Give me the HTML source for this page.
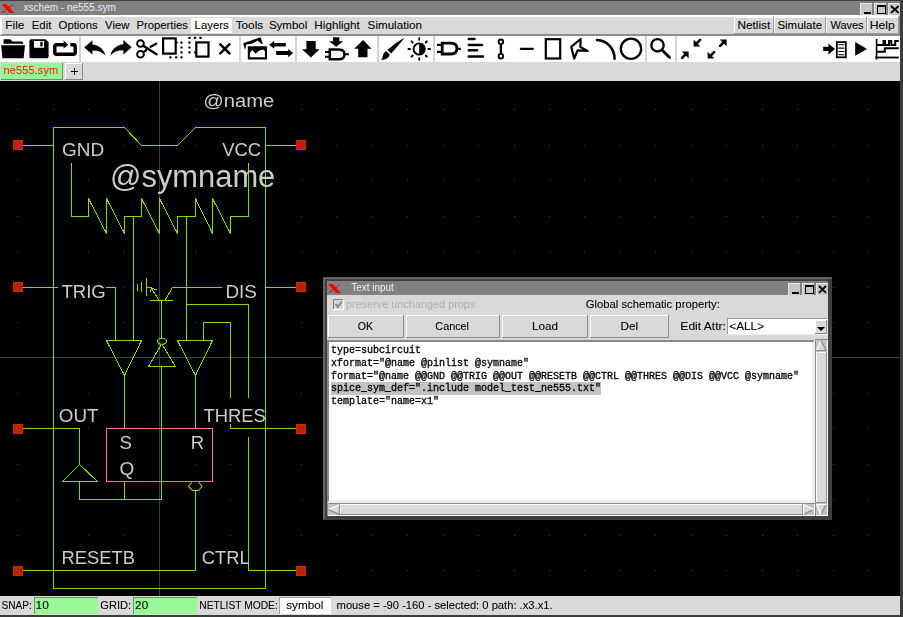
<!DOCTYPE html>
<html><head><meta charset="utf-8"><style>
html,body{margin:0;padding:0;background:#d9d9d9;width:903px;height:617px;overflow:hidden;}
svg{display:block;}
</style></head><body>
<svg width="903" height="617" viewBox="0 0 903 617" shape-rendering="crispEdges">
<rect x="0" y="0" width="903" height="617" fill="#d9d9d9" />
<rect x="0" y="0" width="903" height="15" fill="#808080" />
<rect x="0" y="0" width="903" height="1" fill="#3c3c3c" />
<g shape-rendering="geometricPrecision">
<path d="M1.5,4 L6,4 L14.5,13 L9.5,13 Z" fill="#ff0000"/>
<path d="M2.5,12.8 L13,4.3" stroke="#ff0000" stroke-width="1" shape-rendering="crispEdges"/>
</g>
<text x="23.61" y="11.1" font-size="11" fill="#e8ecf4" font-family='"Liberation Sans", sans-serif' textLength="92.22" lengthAdjust="spacingAndGlyphs" >xschem - ne555.sym</text>
<rect x="860" y="3" width="12" height="12" fill="#c6c6c6" />
<rect x="860" y="3" width="12" height="1" fill="#e4e4e4" />
<rect x="860" y="3" width="1" height="12" fill="#e4e4e4" />
<rect x="874" y="3" width="12" height="12" fill="#c6c6c6" />
<rect x="874" y="3" width="12" height="1" fill="#e4e4e4" />
<rect x="874" y="3" width="1" height="12" fill="#e4e4e4" />
<rect x="888" y="3" width="12" height="12" fill="#c6c6c6" />
<rect x="888" y="3" width="12" height="1" fill="#e4e4e4" />
<rect x="888" y="3" width="1" height="12" fill="#e4e4e4" />
<rect x="864" y="12" width="7" height="2" fill="#000" />
<rect x="877.5" y="5.5" width="8" height="8" fill="none" stroke="#000" stroke-width="1.1"/>
<rect x="877" y="5" width="9" height="2" fill="#000" />
<path d="M891,6 L898.6,12.8 M898.6,6 L891,12.8" stroke="#000" stroke-width="1.8" shape-rendering="geometricPrecision"/>
<rect x="0" y="15" width="900" height="2" fill="#ffffff" />
<rect x="2" y="17" width="896" height="17" fill="#d9d9d9" />
<rect x="0" y="15" width="2" height="19" fill="#ffffff" />
<path d="M2,34 L898,34 L898,17 L900,15 L900,36 L0,36 Z" fill="#8c8c8c" shape-rendering="geometricPrecision"/>
<rect x="191" y="18" width="41" height="15" fill="#ffffff" />
<text x="5.39" y="28.7" font-size="10.5" fill="#000000" font-family='"Liberation Sans", sans-serif' textLength="18.97" lengthAdjust="spacingAndGlyphs" stroke="#000000" stroke-width="0.08" >File</text>
<text x="31.82" y="28.7" font-size="10.5" fill="#000000" font-family='"Liberation Sans", sans-serif' textLength="19.51" lengthAdjust="spacingAndGlyphs" stroke="#000000" stroke-width="0.08" >Edit</text>
<text x="58.60" y="28.7" font-size="10.5" fill="#000000" font-family='"Liberation Sans", sans-serif' textLength="39.04" lengthAdjust="spacingAndGlyphs" stroke="#000000" stroke-width="0.08" >Options</text>
<text x="105.10" y="28.7" font-size="10.5" fill="#000000" font-family='"Liberation Sans", sans-serif' textLength="24.25" lengthAdjust="spacingAndGlyphs" stroke="#000000" stroke-width="0.08" >View</text>
<text x="136.46" y="28.7" font-size="10.5" fill="#000000" font-family='"Liberation Sans", sans-serif' textLength="51.35" lengthAdjust="spacingAndGlyphs" stroke="#000000" stroke-width="0.08" >Properties</text>
<text x="194.63" y="28.7" font-size="10.5" fill="#000000" font-family='"Liberation Sans", sans-serif' textLength="34.02" lengthAdjust="spacingAndGlyphs" stroke="#000000" stroke-width="0.08" >Layers</text>
<text x="235.72" y="28.7" font-size="10.5" fill="#000000" font-family='"Liberation Sans", sans-serif' textLength="27.39" lengthAdjust="spacingAndGlyphs" stroke="#000000" stroke-width="0.08" >Tools</text>
<text x="268.96" y="28.7" font-size="10.5" fill="#000000" font-family='"Liberation Sans", sans-serif' textLength="38.27" lengthAdjust="spacingAndGlyphs" stroke="#000000" stroke-width="0.08" >Symbol</text>
<text x="314.36" y="28.7" font-size="10.5" fill="#000000" font-family='"Liberation Sans", sans-serif' textLength="45.50" lengthAdjust="spacingAndGlyphs" stroke="#000000" stroke-width="0.08" >Highlight</text>
<text x="367.63" y="28.7" font-size="10.5" fill="#000000" font-family='"Liberation Sans", sans-serif' textLength="54.29" lengthAdjust="spacingAndGlyphs" stroke="#000000" stroke-width="0.08" >Simulation</text>
<rect x="734" y="17" width="40" height="17" fill="#d9d9d9" />
<rect x="734" y="17" width="40" height="1" fill="#ffffff" />
<rect x="734" y="17" width="1" height="17" fill="#ffffff" />
<rect x="734" y="33" width="40" height="1" fill="#9a9a9a" />
<rect x="773" y="17" width="1" height="17" fill="#9a9a9a" />
<text x="737.44" y="28.7" font-size="10.5" fill="#000000" font-family='"Liberation Sans", sans-serif' textLength="32.79" lengthAdjust="spacingAndGlyphs" stroke="#000000" stroke-width="0.08" >Netlist</text>
<rect x="774" y="17" width="52" height="17" fill="#d9d9d9" />
<rect x="774" y="17" width="52" height="1" fill="#ffffff" />
<rect x="774" y="17" width="1" height="17" fill="#ffffff" />
<rect x="774" y="33" width="52" height="1" fill="#9a9a9a" />
<rect x="825" y="17" width="1" height="17" fill="#9a9a9a" />
<text x="777.41" y="28.7" font-size="10.5" fill="#000000" font-family='"Liberation Sans", sans-serif' textLength="44.65" lengthAdjust="spacingAndGlyphs" stroke="#000000" stroke-width="0.08" >Simulate</text>
<rect x="826" y="17" width="41" height="17" fill="#d9d9d9" />
<rect x="826" y="17" width="41" height="1" fill="#ffffff" />
<rect x="826" y="17" width="1" height="17" fill="#ffffff" />
<rect x="826" y="33" width="41" height="1" fill="#9a9a9a" />
<rect x="866" y="17" width="1" height="17" fill="#9a9a9a" />
<text x="830.43" y="28.7" font-size="10.5" fill="#000000" font-family='"Liberation Sans", sans-serif' textLength="33.16" lengthAdjust="spacingAndGlyphs" stroke="#000000" stroke-width="0.08" >Waves</text>
<rect x="867" y="17" width="32" height="17" fill="#d9d9d9" />
<rect x="867" y="17" width="32" height="1" fill="#ffffff" />
<rect x="867" y="17" width="1" height="17" fill="#ffffff" />
<rect x="867" y="33" width="32" height="1" fill="#9a9a9a" />
<rect x="898" y="17" width="1" height="17" fill="#9a9a9a" />
<text x="869.70" y="28.7" font-size="10.5" fill="#000000" font-family='"Liberation Sans", sans-serif' textLength="25.03" lengthAdjust="spacingAndGlyphs" stroke="#000000" stroke-width="0.08" >Help</text>
<rect x="0" y="36" width="900" height="26" fill="#ffffff" />
<rect x="79" y="36" width="2" height="26" fill="#d4d4d4" />
<rect x="239" y="36" width="2" height="26" fill="#d4d4d4" />
<rect x="295" y="36" width="2" height="26" fill="#d4d4d4" />
<rect x="377" y="36" width="2" height="26" fill="#d4d4d4" />
<rect x="433" y="36" width="2" height="26" fill="#d4d4d4" />
<rect x="645" y="36" width="2" height="26" fill="#d4d4d4" />
<rect x="675" y="36" width="2" height="26" fill="#d4d4d4" />
<rect x="0" y="62" width="900" height="19" fill="#d9d9d9" />
<rect x="1" y="63" width="62" height="17" fill="#98f898" />
<rect x="1" y="79" width="62" height="1" fill="#5a9a5a" />
<rect x="62" y="63" width="1" height="17" fill="#5a9a5a" />
<text x="3.57" y="74.2" font-size="10.5" fill="#ff1010" font-family='"Liberation Sans", sans-serif' textLength="54.78" lengthAdjust="spacingAndGlyphs" >ne555.sym</text>
<rect x="65" y="63" width="18" height="17" fill="#d9d9d9" />
<rect x="65" y="63" width="18" height="1" fill="#ffffff" />
<rect x="65" y="63" width="1" height="17" fill="#ffffff" />
<rect x="65" y="79" width="18" height="1" fill="#8a8a8a" />
<rect x="82" y="63" width="1" height="17" fill="#8a8a8a" />
<path d="M70.8,71.5 L77.8,71.5 M74.5,68 L74.5,75" stroke="#000" stroke-width="1"/>
<rect x="0" y="81" width="900" height="515" fill="#000000" />
<g>
<rect x="17" y="109" width="1" height="1" fill="#3f3f3f" />
<rect x="17" y="145" width="1" height="1" fill="#3f3f3f" />
<rect x="17" y="180" width="1" height="1" fill="#3f3f3f" />
<rect x="17" y="216" width="1" height="1" fill="#3f3f3f" />
<rect x="17" y="251" width="1" height="1" fill="#3f3f3f" />
<rect x="17" y="287" width="1" height="1" fill="#3f3f3f" />
<rect x="17" y="322" width="1" height="1" fill="#3f3f3f" />
<rect x="17" y="357" width="1" height="1" fill="#3f3f3f" />
<rect x="17" y="393" width="1" height="1" fill="#3f3f3f" />
<rect x="17" y="428" width="1" height="1" fill="#3f3f3f" />
<rect x="17" y="464" width="1" height="1" fill="#3f3f3f" />
<rect x="17" y="499" width="1" height="1" fill="#3f3f3f" />
<rect x="17" y="535" width="1" height="1" fill="#3f3f3f" />
<rect x="17" y="570" width="1" height="1" fill="#3f3f3f" />
<rect x="53" y="109" width="1" height="1" fill="#3f3f3f" />
<rect x="53" y="145" width="1" height="1" fill="#3f3f3f" />
<rect x="53" y="180" width="1" height="1" fill="#3f3f3f" />
<rect x="53" y="216" width="1" height="1" fill="#3f3f3f" />
<rect x="53" y="251" width="1" height="1" fill="#3f3f3f" />
<rect x="53" y="287" width="1" height="1" fill="#3f3f3f" />
<rect x="53" y="322" width="1" height="1" fill="#3f3f3f" />
<rect x="53" y="357" width="1" height="1" fill="#3f3f3f" />
<rect x="53" y="393" width="1" height="1" fill="#3f3f3f" />
<rect x="53" y="428" width="1" height="1" fill="#3f3f3f" />
<rect x="53" y="464" width="1" height="1" fill="#3f3f3f" />
<rect x="53" y="499" width="1" height="1" fill="#3f3f3f" />
<rect x="53" y="535" width="1" height="1" fill="#3f3f3f" />
<rect x="53" y="570" width="1" height="1" fill="#3f3f3f" />
<rect x="88" y="109" width="1" height="1" fill="#3f3f3f" />
<rect x="88" y="145" width="1" height="1" fill="#3f3f3f" />
<rect x="88" y="180" width="1" height="1" fill="#3f3f3f" />
<rect x="88" y="216" width="1" height="1" fill="#3f3f3f" />
<rect x="88" y="251" width="1" height="1" fill="#3f3f3f" />
<rect x="88" y="287" width="1" height="1" fill="#3f3f3f" />
<rect x="88" y="322" width="1" height="1" fill="#3f3f3f" />
<rect x="88" y="357" width="1" height="1" fill="#3f3f3f" />
<rect x="88" y="393" width="1" height="1" fill="#3f3f3f" />
<rect x="88" y="428" width="1" height="1" fill="#3f3f3f" />
<rect x="88" y="464" width="1" height="1" fill="#3f3f3f" />
<rect x="88" y="499" width="1" height="1" fill="#3f3f3f" />
<rect x="88" y="535" width="1" height="1" fill="#3f3f3f" />
<rect x="88" y="570" width="1" height="1" fill="#3f3f3f" />
<rect x="124" y="109" width="1" height="1" fill="#3f3f3f" />
<rect x="124" y="145" width="1" height="1" fill="#3f3f3f" />
<rect x="124" y="180" width="1" height="1" fill="#3f3f3f" />
<rect x="124" y="216" width="1" height="1" fill="#3f3f3f" />
<rect x="124" y="251" width="1" height="1" fill="#3f3f3f" />
<rect x="124" y="287" width="1" height="1" fill="#3f3f3f" />
<rect x="124" y="322" width="1" height="1" fill="#3f3f3f" />
<rect x="124" y="357" width="1" height="1" fill="#3f3f3f" />
<rect x="124" y="393" width="1" height="1" fill="#3f3f3f" />
<rect x="124" y="428" width="1" height="1" fill="#3f3f3f" />
<rect x="124" y="464" width="1" height="1" fill="#3f3f3f" />
<rect x="124" y="499" width="1" height="1" fill="#3f3f3f" />
<rect x="124" y="535" width="1" height="1" fill="#3f3f3f" />
<rect x="124" y="570" width="1" height="1" fill="#3f3f3f" />
<rect x="159" y="109" width="1" height="1" fill="#3f3f3f" />
<rect x="159" y="145" width="1" height="1" fill="#3f3f3f" />
<rect x="159" y="180" width="1" height="1" fill="#3f3f3f" />
<rect x="159" y="216" width="1" height="1" fill="#3f3f3f" />
<rect x="159" y="251" width="1" height="1" fill="#3f3f3f" />
<rect x="159" y="287" width="1" height="1" fill="#3f3f3f" />
<rect x="159" y="322" width="1" height="1" fill="#3f3f3f" />
<rect x="159" y="357" width="1" height="1" fill="#3f3f3f" />
<rect x="159" y="393" width="1" height="1" fill="#3f3f3f" />
<rect x="159" y="428" width="1" height="1" fill="#3f3f3f" />
<rect x="159" y="464" width="1" height="1" fill="#3f3f3f" />
<rect x="159" y="499" width="1" height="1" fill="#3f3f3f" />
<rect x="159" y="535" width="1" height="1" fill="#3f3f3f" />
<rect x="159" y="570" width="1" height="1" fill="#3f3f3f" />
<rect x="195" y="109" width="1" height="1" fill="#3f3f3f" />
<rect x="195" y="145" width="1" height="1" fill="#3f3f3f" />
<rect x="195" y="180" width="1" height="1" fill="#3f3f3f" />
<rect x="195" y="216" width="1" height="1" fill="#3f3f3f" />
<rect x="195" y="251" width="1" height="1" fill="#3f3f3f" />
<rect x="195" y="287" width="1" height="1" fill="#3f3f3f" />
<rect x="195" y="322" width="1" height="1" fill="#3f3f3f" />
<rect x="195" y="357" width="1" height="1" fill="#3f3f3f" />
<rect x="195" y="393" width="1" height="1" fill="#3f3f3f" />
<rect x="195" y="428" width="1" height="1" fill="#3f3f3f" />
<rect x="195" y="464" width="1" height="1" fill="#3f3f3f" />
<rect x="195" y="499" width="1" height="1" fill="#3f3f3f" />
<rect x="195" y="535" width="1" height="1" fill="#3f3f3f" />
<rect x="195" y="570" width="1" height="1" fill="#3f3f3f" />
<rect x="230" y="109" width="1" height="1" fill="#3f3f3f" />
<rect x="230" y="145" width="1" height="1" fill="#3f3f3f" />
<rect x="230" y="180" width="1" height="1" fill="#3f3f3f" />
<rect x="230" y="216" width="1" height="1" fill="#3f3f3f" />
<rect x="230" y="251" width="1" height="1" fill="#3f3f3f" />
<rect x="230" y="287" width="1" height="1" fill="#3f3f3f" />
<rect x="230" y="322" width="1" height="1" fill="#3f3f3f" />
<rect x="230" y="357" width="1" height="1" fill="#3f3f3f" />
<rect x="230" y="393" width="1" height="1" fill="#3f3f3f" />
<rect x="230" y="428" width="1" height="1" fill="#3f3f3f" />
<rect x="230" y="464" width="1" height="1" fill="#3f3f3f" />
<rect x="230" y="499" width="1" height="1" fill="#3f3f3f" />
<rect x="230" y="535" width="1" height="1" fill="#3f3f3f" />
<rect x="230" y="570" width="1" height="1" fill="#3f3f3f" />
<rect x="265" y="109" width="1" height="1" fill="#3f3f3f" />
<rect x="265" y="145" width="1" height="1" fill="#3f3f3f" />
<rect x="265" y="180" width="1" height="1" fill="#3f3f3f" />
<rect x="265" y="216" width="1" height="1" fill="#3f3f3f" />
<rect x="265" y="251" width="1" height="1" fill="#3f3f3f" />
<rect x="265" y="287" width="1" height="1" fill="#3f3f3f" />
<rect x="265" y="322" width="1" height="1" fill="#3f3f3f" />
<rect x="265" y="357" width="1" height="1" fill="#3f3f3f" />
<rect x="265" y="393" width="1" height="1" fill="#3f3f3f" />
<rect x="265" y="428" width="1" height="1" fill="#3f3f3f" />
<rect x="265" y="464" width="1" height="1" fill="#3f3f3f" />
<rect x="265" y="499" width="1" height="1" fill="#3f3f3f" />
<rect x="265" y="535" width="1" height="1" fill="#3f3f3f" />
<rect x="265" y="570" width="1" height="1" fill="#3f3f3f" />
<rect x="301" y="109" width="1" height="1" fill="#3f3f3f" />
<rect x="301" y="145" width="1" height="1" fill="#3f3f3f" />
<rect x="301" y="180" width="1" height="1" fill="#3f3f3f" />
<rect x="301" y="216" width="1" height="1" fill="#3f3f3f" />
<rect x="301" y="251" width="1" height="1" fill="#3f3f3f" />
<rect x="301" y="287" width="1" height="1" fill="#3f3f3f" />
<rect x="301" y="322" width="1" height="1" fill="#3f3f3f" />
<rect x="301" y="357" width="1" height="1" fill="#3f3f3f" />
<rect x="301" y="393" width="1" height="1" fill="#3f3f3f" />
<rect x="301" y="428" width="1" height="1" fill="#3f3f3f" />
<rect x="301" y="464" width="1" height="1" fill="#3f3f3f" />
<rect x="301" y="499" width="1" height="1" fill="#3f3f3f" />
<rect x="301" y="535" width="1" height="1" fill="#3f3f3f" />
<rect x="301" y="570" width="1" height="1" fill="#3f3f3f" />
<rect x="336" y="109" width="1" height="1" fill="#3f3f3f" />
<rect x="336" y="145" width="1" height="1" fill="#3f3f3f" />
<rect x="336" y="180" width="1" height="1" fill="#3f3f3f" />
<rect x="336" y="216" width="1" height="1" fill="#3f3f3f" />
<rect x="336" y="251" width="1" height="1" fill="#3f3f3f" />
<rect x="336" y="287" width="1" height="1" fill="#3f3f3f" />
<rect x="336" y="322" width="1" height="1" fill="#3f3f3f" />
<rect x="336" y="357" width="1" height="1" fill="#3f3f3f" />
<rect x="336" y="393" width="1" height="1" fill="#3f3f3f" />
<rect x="336" y="428" width="1" height="1" fill="#3f3f3f" />
<rect x="336" y="464" width="1" height="1" fill="#3f3f3f" />
<rect x="336" y="499" width="1" height="1" fill="#3f3f3f" />
<rect x="336" y="535" width="1" height="1" fill="#3f3f3f" />
<rect x="336" y="570" width="1" height="1" fill="#3f3f3f" />
<rect x="372" y="109" width="1" height="1" fill="#3f3f3f" />
<rect x="372" y="145" width="1" height="1" fill="#3f3f3f" />
<rect x="372" y="180" width="1" height="1" fill="#3f3f3f" />
<rect x="372" y="216" width="1" height="1" fill="#3f3f3f" />
<rect x="372" y="251" width="1" height="1" fill="#3f3f3f" />
<rect x="372" y="287" width="1" height="1" fill="#3f3f3f" />
<rect x="372" y="322" width="1" height="1" fill="#3f3f3f" />
<rect x="372" y="357" width="1" height="1" fill="#3f3f3f" />
<rect x="372" y="393" width="1" height="1" fill="#3f3f3f" />
<rect x="372" y="428" width="1" height="1" fill="#3f3f3f" />
<rect x="372" y="464" width="1" height="1" fill="#3f3f3f" />
<rect x="372" y="499" width="1" height="1" fill="#3f3f3f" />
<rect x="372" y="535" width="1" height="1" fill="#3f3f3f" />
<rect x="372" y="570" width="1" height="1" fill="#3f3f3f" />
<rect x="407" y="109" width="1" height="1" fill="#3f3f3f" />
<rect x="407" y="145" width="1" height="1" fill="#3f3f3f" />
<rect x="407" y="180" width="1" height="1" fill="#3f3f3f" />
<rect x="407" y="216" width="1" height="1" fill="#3f3f3f" />
<rect x="407" y="251" width="1" height="1" fill="#3f3f3f" />
<rect x="407" y="287" width="1" height="1" fill="#3f3f3f" />
<rect x="407" y="322" width="1" height="1" fill="#3f3f3f" />
<rect x="407" y="357" width="1" height="1" fill="#3f3f3f" />
<rect x="407" y="393" width="1" height="1" fill="#3f3f3f" />
<rect x="407" y="428" width="1" height="1" fill="#3f3f3f" />
<rect x="407" y="464" width="1" height="1" fill="#3f3f3f" />
<rect x="407" y="499" width="1" height="1" fill="#3f3f3f" />
<rect x="407" y="535" width="1" height="1" fill="#3f3f3f" />
<rect x="407" y="570" width="1" height="1" fill="#3f3f3f" />
<rect x="443" y="109" width="1" height="1" fill="#3f3f3f" />
<rect x="443" y="145" width="1" height="1" fill="#3f3f3f" />
<rect x="443" y="180" width="1" height="1" fill="#3f3f3f" />
<rect x="443" y="216" width="1" height="1" fill="#3f3f3f" />
<rect x="443" y="251" width="1" height="1" fill="#3f3f3f" />
<rect x="443" y="287" width="1" height="1" fill="#3f3f3f" />
<rect x="443" y="322" width="1" height="1" fill="#3f3f3f" />
<rect x="443" y="357" width="1" height="1" fill="#3f3f3f" />
<rect x="443" y="393" width="1" height="1" fill="#3f3f3f" />
<rect x="443" y="428" width="1" height="1" fill="#3f3f3f" />
<rect x="443" y="464" width="1" height="1" fill="#3f3f3f" />
<rect x="443" y="499" width="1" height="1" fill="#3f3f3f" />
<rect x="443" y="535" width="1" height="1" fill="#3f3f3f" />
<rect x="443" y="570" width="1" height="1" fill="#3f3f3f" />
<rect x="478" y="109" width="1" height="1" fill="#3f3f3f" />
<rect x="478" y="145" width="1" height="1" fill="#3f3f3f" />
<rect x="478" y="180" width="1" height="1" fill="#3f3f3f" />
<rect x="478" y="216" width="1" height="1" fill="#3f3f3f" />
<rect x="478" y="251" width="1" height="1" fill="#3f3f3f" />
<rect x="478" y="287" width="1" height="1" fill="#3f3f3f" />
<rect x="478" y="322" width="1" height="1" fill="#3f3f3f" />
<rect x="478" y="357" width="1" height="1" fill="#3f3f3f" />
<rect x="478" y="393" width="1" height="1" fill="#3f3f3f" />
<rect x="478" y="428" width="1" height="1" fill="#3f3f3f" />
<rect x="478" y="464" width="1" height="1" fill="#3f3f3f" />
<rect x="478" y="499" width="1" height="1" fill="#3f3f3f" />
<rect x="478" y="535" width="1" height="1" fill="#3f3f3f" />
<rect x="478" y="570" width="1" height="1" fill="#3f3f3f" />
<rect x="514" y="109" width="1" height="1" fill="#3f3f3f" />
<rect x="514" y="145" width="1" height="1" fill="#3f3f3f" />
<rect x="514" y="180" width="1" height="1" fill="#3f3f3f" />
<rect x="514" y="216" width="1" height="1" fill="#3f3f3f" />
<rect x="514" y="251" width="1" height="1" fill="#3f3f3f" />
<rect x="514" y="287" width="1" height="1" fill="#3f3f3f" />
<rect x="514" y="322" width="1" height="1" fill="#3f3f3f" />
<rect x="514" y="357" width="1" height="1" fill="#3f3f3f" />
<rect x="514" y="393" width="1" height="1" fill="#3f3f3f" />
<rect x="514" y="428" width="1" height="1" fill="#3f3f3f" />
<rect x="514" y="464" width="1" height="1" fill="#3f3f3f" />
<rect x="514" y="499" width="1" height="1" fill="#3f3f3f" />
<rect x="514" y="535" width="1" height="1" fill="#3f3f3f" />
<rect x="514" y="570" width="1" height="1" fill="#3f3f3f" />
<rect x="549" y="109" width="1" height="1" fill="#3f3f3f" />
<rect x="549" y="145" width="1" height="1" fill="#3f3f3f" />
<rect x="549" y="180" width="1" height="1" fill="#3f3f3f" />
<rect x="549" y="216" width="1" height="1" fill="#3f3f3f" />
<rect x="549" y="251" width="1" height="1" fill="#3f3f3f" />
<rect x="549" y="287" width="1" height="1" fill="#3f3f3f" />
<rect x="549" y="322" width="1" height="1" fill="#3f3f3f" />
<rect x="549" y="357" width="1" height="1" fill="#3f3f3f" />
<rect x="549" y="393" width="1" height="1" fill="#3f3f3f" />
<rect x="549" y="428" width="1" height="1" fill="#3f3f3f" />
<rect x="549" y="464" width="1" height="1" fill="#3f3f3f" />
<rect x="549" y="499" width="1" height="1" fill="#3f3f3f" />
<rect x="549" y="535" width="1" height="1" fill="#3f3f3f" />
<rect x="549" y="570" width="1" height="1" fill="#3f3f3f" />
<rect x="584" y="109" width="1" height="1" fill="#3f3f3f" />
<rect x="584" y="145" width="1" height="1" fill="#3f3f3f" />
<rect x="584" y="180" width="1" height="1" fill="#3f3f3f" />
<rect x="584" y="216" width="1" height="1" fill="#3f3f3f" />
<rect x="584" y="251" width="1" height="1" fill="#3f3f3f" />
<rect x="584" y="287" width="1" height="1" fill="#3f3f3f" />
<rect x="584" y="322" width="1" height="1" fill="#3f3f3f" />
<rect x="584" y="357" width="1" height="1" fill="#3f3f3f" />
<rect x="584" y="393" width="1" height="1" fill="#3f3f3f" />
<rect x="584" y="428" width="1" height="1" fill="#3f3f3f" />
<rect x="584" y="464" width="1" height="1" fill="#3f3f3f" />
<rect x="584" y="499" width="1" height="1" fill="#3f3f3f" />
<rect x="584" y="535" width="1" height="1" fill="#3f3f3f" />
<rect x="584" y="570" width="1" height="1" fill="#3f3f3f" />
<rect x="620" y="109" width="1" height="1" fill="#3f3f3f" />
<rect x="620" y="145" width="1" height="1" fill="#3f3f3f" />
<rect x="620" y="180" width="1" height="1" fill="#3f3f3f" />
<rect x="620" y="216" width="1" height="1" fill="#3f3f3f" />
<rect x="620" y="251" width="1" height="1" fill="#3f3f3f" />
<rect x="620" y="287" width="1" height="1" fill="#3f3f3f" />
<rect x="620" y="322" width="1" height="1" fill="#3f3f3f" />
<rect x="620" y="357" width="1" height="1" fill="#3f3f3f" />
<rect x="620" y="393" width="1" height="1" fill="#3f3f3f" />
<rect x="620" y="428" width="1" height="1" fill="#3f3f3f" />
<rect x="620" y="464" width="1" height="1" fill="#3f3f3f" />
<rect x="620" y="499" width="1" height="1" fill="#3f3f3f" />
<rect x="620" y="535" width="1" height="1" fill="#3f3f3f" />
<rect x="620" y="570" width="1" height="1" fill="#3f3f3f" />
<rect x="655" y="109" width="1" height="1" fill="#3f3f3f" />
<rect x="655" y="145" width="1" height="1" fill="#3f3f3f" />
<rect x="655" y="180" width="1" height="1" fill="#3f3f3f" />
<rect x="655" y="216" width="1" height="1" fill="#3f3f3f" />
<rect x="655" y="251" width="1" height="1" fill="#3f3f3f" />
<rect x="655" y="287" width="1" height="1" fill="#3f3f3f" />
<rect x="655" y="322" width="1" height="1" fill="#3f3f3f" />
<rect x="655" y="357" width="1" height="1" fill="#3f3f3f" />
<rect x="655" y="393" width="1" height="1" fill="#3f3f3f" />
<rect x="655" y="428" width="1" height="1" fill="#3f3f3f" />
<rect x="655" y="464" width="1" height="1" fill="#3f3f3f" />
<rect x="655" y="499" width="1" height="1" fill="#3f3f3f" />
<rect x="655" y="535" width="1" height="1" fill="#3f3f3f" />
<rect x="655" y="570" width="1" height="1" fill="#3f3f3f" />
<rect x="691" y="109" width="1" height="1" fill="#3f3f3f" />
<rect x="691" y="145" width="1" height="1" fill="#3f3f3f" />
<rect x="691" y="180" width="1" height="1" fill="#3f3f3f" />
<rect x="691" y="216" width="1" height="1" fill="#3f3f3f" />
<rect x="691" y="251" width="1" height="1" fill="#3f3f3f" />
<rect x="691" y="287" width="1" height="1" fill="#3f3f3f" />
<rect x="691" y="322" width="1" height="1" fill="#3f3f3f" />
<rect x="691" y="357" width="1" height="1" fill="#3f3f3f" />
<rect x="691" y="393" width="1" height="1" fill="#3f3f3f" />
<rect x="691" y="428" width="1" height="1" fill="#3f3f3f" />
<rect x="691" y="464" width="1" height="1" fill="#3f3f3f" />
<rect x="691" y="499" width="1" height="1" fill="#3f3f3f" />
<rect x="691" y="535" width="1" height="1" fill="#3f3f3f" />
<rect x="691" y="570" width="1" height="1" fill="#3f3f3f" />
<rect x="726" y="109" width="1" height="1" fill="#3f3f3f" />
<rect x="726" y="145" width="1" height="1" fill="#3f3f3f" />
<rect x="726" y="180" width="1" height="1" fill="#3f3f3f" />
<rect x="726" y="216" width="1" height="1" fill="#3f3f3f" />
<rect x="726" y="251" width="1" height="1" fill="#3f3f3f" />
<rect x="726" y="287" width="1" height="1" fill="#3f3f3f" />
<rect x="726" y="322" width="1" height="1" fill="#3f3f3f" />
<rect x="726" y="357" width="1" height="1" fill="#3f3f3f" />
<rect x="726" y="393" width="1" height="1" fill="#3f3f3f" />
<rect x="726" y="428" width="1" height="1" fill="#3f3f3f" />
<rect x="726" y="464" width="1" height="1" fill="#3f3f3f" />
<rect x="726" y="499" width="1" height="1" fill="#3f3f3f" />
<rect x="726" y="535" width="1" height="1" fill="#3f3f3f" />
<rect x="726" y="570" width="1" height="1" fill="#3f3f3f" />
<rect x="762" y="109" width="1" height="1" fill="#3f3f3f" />
<rect x="762" y="145" width="1" height="1" fill="#3f3f3f" />
<rect x="762" y="180" width="1" height="1" fill="#3f3f3f" />
<rect x="762" y="216" width="1" height="1" fill="#3f3f3f" />
<rect x="762" y="251" width="1" height="1" fill="#3f3f3f" />
<rect x="762" y="287" width="1" height="1" fill="#3f3f3f" />
<rect x="762" y="322" width="1" height="1" fill="#3f3f3f" />
<rect x="762" y="357" width="1" height="1" fill="#3f3f3f" />
<rect x="762" y="393" width="1" height="1" fill="#3f3f3f" />
<rect x="762" y="428" width="1" height="1" fill="#3f3f3f" />
<rect x="762" y="464" width="1" height="1" fill="#3f3f3f" />
<rect x="762" y="499" width="1" height="1" fill="#3f3f3f" />
<rect x="762" y="535" width="1" height="1" fill="#3f3f3f" />
<rect x="762" y="570" width="1" height="1" fill="#3f3f3f" />
<rect x="797" y="109" width="1" height="1" fill="#3f3f3f" />
<rect x="797" y="145" width="1" height="1" fill="#3f3f3f" />
<rect x="797" y="180" width="1" height="1" fill="#3f3f3f" />
<rect x="797" y="216" width="1" height="1" fill="#3f3f3f" />
<rect x="797" y="251" width="1" height="1" fill="#3f3f3f" />
<rect x="797" y="287" width="1" height="1" fill="#3f3f3f" />
<rect x="797" y="322" width="1" height="1" fill="#3f3f3f" />
<rect x="797" y="357" width="1" height="1" fill="#3f3f3f" />
<rect x="797" y="393" width="1" height="1" fill="#3f3f3f" />
<rect x="797" y="428" width="1" height="1" fill="#3f3f3f" />
<rect x="797" y="464" width="1" height="1" fill="#3f3f3f" />
<rect x="797" y="499" width="1" height="1" fill="#3f3f3f" />
<rect x="797" y="535" width="1" height="1" fill="#3f3f3f" />
<rect x="797" y="570" width="1" height="1" fill="#3f3f3f" />
<rect x="833" y="109" width="1" height="1" fill="#3f3f3f" />
<rect x="833" y="145" width="1" height="1" fill="#3f3f3f" />
<rect x="833" y="180" width="1" height="1" fill="#3f3f3f" />
<rect x="833" y="216" width="1" height="1" fill="#3f3f3f" />
<rect x="833" y="251" width="1" height="1" fill="#3f3f3f" />
<rect x="833" y="287" width="1" height="1" fill="#3f3f3f" />
<rect x="833" y="322" width="1" height="1" fill="#3f3f3f" />
<rect x="833" y="357" width="1" height="1" fill="#3f3f3f" />
<rect x="833" y="393" width="1" height="1" fill="#3f3f3f" />
<rect x="833" y="428" width="1" height="1" fill="#3f3f3f" />
<rect x="833" y="464" width="1" height="1" fill="#3f3f3f" />
<rect x="833" y="499" width="1" height="1" fill="#3f3f3f" />
<rect x="833" y="535" width="1" height="1" fill="#3f3f3f" />
<rect x="833" y="570" width="1" height="1" fill="#3f3f3f" />
<rect x="868" y="109" width="1" height="1" fill="#3f3f3f" />
<rect x="868" y="145" width="1" height="1" fill="#3f3f3f" />
<rect x="868" y="180" width="1" height="1" fill="#3f3f3f" />
<rect x="868" y="216" width="1" height="1" fill="#3f3f3f" />
<rect x="868" y="251" width="1" height="1" fill="#3f3f3f" />
<rect x="868" y="287" width="1" height="1" fill="#3f3f3f" />
<rect x="868" y="322" width="1" height="1" fill="#3f3f3f" />
<rect x="868" y="357" width="1" height="1" fill="#3f3f3f" />
<rect x="868" y="393" width="1" height="1" fill="#3f3f3f" />
<rect x="868" y="428" width="1" height="1" fill="#3f3f3f" />
<rect x="868" y="464" width="1" height="1" fill="#3f3f3f" />
<rect x="868" y="499" width="1" height="1" fill="#3f3f3f" />
<rect x="868" y="535" width="1" height="1" fill="#3f3f3f" />
<rect x="868" y="570" width="1" height="1" fill="#3f3f3f" />
<rect x="159" y="81" width="1" height="515" fill="#3f3f3f" />
<rect x="0" y="357" width="900" height="1" fill="#3f3f3f" />
</g>
<g shape-rendering="crispEdges">
<polyline points="124.5,127.5 53.5,127.5 53.5,588.5 265.5,588.5 265.5,127.5 195.5,127.5" fill="none" stroke="#88dd00" stroke-width="1" stroke-linecap="square"/>
</g>
<g shape-rendering="crispEdges">
<polyline points="124.5,127.5 141.5,145.5 177.5,145.5 195.5,127.5" fill="none" stroke="#88dd00" stroke-width="1" stroke-linecap="square"/>
<polyline points="130.5,133.5 137.5,140.5" fill="none" stroke="#88dd00" stroke-width="1" stroke-linecap="square"/>
<polyline points="86.5,470.5 92.5,476.5" fill="none" stroke="#88dd00" stroke-width="1" stroke-linecap="square"/>
</g>
<g shape-rendering="crispEdges">
<polyline points="17.5,145.5 53.5,145.5" fill="none" stroke="#88dd00" stroke-width="1" stroke-linecap="square"/>
<polyline points="265.5,145.5 301.5,145.5" fill="none" stroke="#88dd00" stroke-width="1" stroke-linecap="square"/>
<polyline points="17.5,287.5 57.5,287.5" fill="none" stroke="#88dd00" stroke-width="1" stroke-linecap="square"/>
<polyline points="106.5,287.5 115.5,287.5 115.5,340.5" fill="none" stroke="#88dd00" stroke-width="1" stroke-linecap="square"/>
<polyline points="17.5,428.5 79.5,428.5 79.5,464.5" fill="none" stroke="#88dd00" stroke-width="1" stroke-linecap="square"/>
<polyline points="17.5,570.5 195.5,570.5" fill="none" stroke="#88dd00" stroke-width="1" stroke-linecap="square"/>
<polyline points="195.5,490.5 195.5,570.5" fill="none" stroke="#88dd00" stroke-width="1" stroke-linecap="square"/>
<polyline points="265.5,287.5 301.5,287.5" fill="none" stroke="#88dd00" stroke-width="1" stroke-linecap="square"/>
<polyline points="172.5,287.5 221.5,287.5" fill="none" stroke="#88dd00" stroke-width="1" stroke-linecap="square"/>
<polyline points="230.5,428.5 301.5,428.5" fill="none" stroke="#88dd00" stroke-width="1" stroke-linecap="square"/>
<polyline points="230.5,424.5 230.5,428.5" fill="none" stroke="#88dd00" stroke-width="1" stroke-linecap="square"/>
<polyline points="301.5,570.5 248.5,570.5" fill="none" stroke="#88dd00" stroke-width="1" stroke-linecap="square"/>
<polyline points="248.5,437.5 248.5,570.5" fill="none" stroke="#88dd00" stroke-width="1" stroke-linecap="square"/>
<polyline points="133.5,216.5 133.5,340.5" fill="none" stroke="#88dd00" stroke-width="1" stroke-linecap="square"/>
<polyline points="186.5,216.5 186.5,340.5" fill="none" stroke="#88dd00" stroke-width="1" stroke-linecap="square"/>
<polyline points="124.5,375.5 124.5,428.5" fill="none" stroke="#88dd00" stroke-width="1" stroke-linecap="square"/>
<polyline points="195.5,375.5 195.5,428.5" fill="none" stroke="#88dd00" stroke-width="1" stroke-linecap="square"/>
<polyline points="186.5,304.5 248.5,304.5 248.5,397.5" fill="none" stroke="#88dd00" stroke-width="1" stroke-linecap="square"/>
<polyline points="203.5,340.5 203.5,322.5 230.5,322.5 230.5,397.5" fill="none" stroke="#88dd00" stroke-width="1" stroke-linecap="square"/>
<polyline points="124.5,481.5 124.5,499.5" fill="none" stroke="#88dd00" stroke-width="1" stroke-linecap="square"/>
<polyline points="79.5,481.5 79.5,499.5 159.5,499.5" fill="none" stroke="#88dd00" stroke-width="1" stroke-linecap="square"/>
<polyline points="161.5,366.5 161.5,499.5 79.5,499.5" fill="none" stroke="#88dd00" stroke-width="1" stroke-linecap="square"/>
<polyline points="71.5,163.5 71.5,216.5 88.5,216.5 88.5,198.5" fill="none" stroke="#88dd00" stroke-width="1" stroke-linecap="square"/>
<polyline points="106.5,233.5 106.5,198.5" fill="none" stroke="#88dd00" stroke-width="1" stroke-linecap="square"/>
<polyline points="124.5,233.5 124.5,216.5 141.5,216.5 141.5,198.5" fill="none" stroke="#88dd00" stroke-width="1" stroke-linecap="square"/>
<polyline points="159.5,233.5 159.5,198.5" fill="none" stroke="#88dd00" stroke-width="1" stroke-linecap="square"/>
<polyline points="177.5,233.5 177.5,216.5 195.5,216.5 195.5,198.5" fill="none" stroke="#88dd00" stroke-width="1" stroke-linecap="square"/>
<polyline points="212.5,233.5 212.5,198.5" fill="none" stroke="#88dd00" stroke-width="1" stroke-linecap="square"/>
<polyline points="230.5,233.5 230.5,216.5 248.5,216.5 248.5,163.5" fill="none" stroke="#88dd00" stroke-width="1" stroke-linecap="square"/>
<polyline points="106.5,340.5 141.5,340.5" fill="none" stroke="#88dd00" stroke-width="1" stroke-linecap="square"/>
<polyline points="177.5,340.5 212.5,340.5" fill="none" stroke="#88dd00" stroke-width="1" stroke-linecap="square"/>
<polyline points="62.5,481.5 97.5,481.5" fill="none" stroke="#88dd00" stroke-width="1" stroke-linecap="square"/>
<polyline points="148.5,366.5 175.5,366.5" fill="none" stroke="#88dd00" stroke-width="1" stroke-linecap="square"/>
<polyline points="150.5,300.5 172.5,300.5" fill="none" stroke="#88dd00" stroke-width="1" stroke-linecap="square"/>
<polyline points="161.5,300.5 161.5,338.5" fill="none" stroke="#88dd00" stroke-width="1" stroke-linecap="square"/>
<polyline points="137.5,284.5 137.5,290.5" fill="none" stroke="#88dd00" stroke-width="1" stroke-linecap="square"/>
<polyline points="141.5,282.5 141.5,291.5" fill="none" stroke="#88dd00" stroke-width="1" stroke-linecap="square"/>
<polyline points="146.5,278.5 146.5,295.5" fill="none" stroke="#88dd00" stroke-width="1" stroke-linecap="square"/>
<polyline points="146.5,287.5 151.5,287.5" fill="none" stroke="#88dd00" stroke-width="1" stroke-linecap="square"/>
</g>
<g shape-rendering="crispEdges">
<polyline points="88.5,198.5 106.5,233.5" fill="none" stroke="#88dd00" stroke-width="1" stroke-linecap="square"/>
<polyline points="106.5,198.5 124.5,233.5" fill="none" stroke="#88dd00" stroke-width="1" stroke-linecap="square"/>
<polyline points="141.5,198.5 159.5,233.5" fill="none" stroke="#88dd00" stroke-width="1" stroke-linecap="square"/>
<polyline points="159.5,198.5 177.5,233.5" fill="none" stroke="#88dd00" stroke-width="1" stroke-linecap="square"/>
<polyline points="195.5,198.5 212.5,233.5" fill="none" stroke="#88dd00" stroke-width="1" stroke-linecap="square"/>
<polyline points="212.5,198.5 230.5,233.5" fill="none" stroke="#88dd00" stroke-width="1" stroke-linecap="square"/>
<polyline points="106.5,340.5 124.5,375.5" fill="none" stroke="#88dd00" stroke-width="1" stroke-linecap="square"/>
<polyline points="141.5,340.5 124.5,375.5" fill="none" stroke="#88dd00" stroke-width="1" stroke-linecap="square"/>
<polyline points="177.5,340.5 195.5,375.5" fill="none" stroke="#88dd00" stroke-width="1" stroke-linecap="square"/>
<polyline points="212.5,340.5 195.5,375.5" fill="none" stroke="#88dd00" stroke-width="1" stroke-linecap="square"/>
<polyline points="62.5,481.5 79.5,464.5" fill="none" stroke="#88dd00" stroke-width="1" stroke-linecap="square"/>
<polyline points="97.5,481.5 79.5,464.5" fill="none" stroke="#88dd00" stroke-width="1" stroke-linecap="square"/>
<polyline points="148.5,366.5 161.0,345.0" fill="none" stroke="#88dd00" stroke-width="1" stroke-linecap="square"/>
<polyline points="175.5,366.5 162.5,345.0" fill="none" stroke="#88dd00" stroke-width="1" stroke-linecap="square"/>
<polyline points="158.5,299.5 151.5,288.5" fill="none" stroke="#88dd00" stroke-width="1" stroke-linecap="square"/>
<polyline points="151.5,288.5 156.0,289.5" fill="none" stroke="#88dd00" stroke-width="1" stroke-linecap="square"/>
<polyline points="151.5,288.5 150.5,291.5" fill="none" stroke="#88dd00" stroke-width="1" stroke-linecap="square"/>
<polyline points="165.5,299.5 172.5,287.5" fill="none" stroke="#88dd00" stroke-width="1" stroke-linecap="square"/>
</g>
<g shape-rendering="geometricPrecision">
<ellipse cx="162" cy="341.3" rx="4.6" ry="3" fill="none" stroke="#88dd00" stroke-width="1.1"/>
<polyline points="192,482 188.5,486.5 192.5,490.5 198.5,490.5 202,486.5 198.5,482" fill="none" stroke="#88dd00" stroke-width="1.1"/>
</g>
<g shape-rendering="crispEdges">
<rect x="106.5" y="428.5" width="106" height="53" fill="none" stroke="#ff7777" stroke-width="1"/>
<rect x="13" y="140" width="10" height="10" fill="#cc2a00" />
<rect x="14" y="141" width="8" height="8" fill="#bb2200" />
<rect x="296" y="140" width="10" height="10" fill="#cc2a00" />
<rect x="297" y="141" width="8" height="8" fill="#bb2200" />
<rect x="13" y="282" width="10" height="10" fill="#cc2a00" />
<rect x="14" y="283" width="8" height="8" fill="#bb2200" />
<rect x="296" y="282" width="10" height="10" fill="#cc2a00" />
<rect x="297" y="283" width="8" height="8" fill="#bb2200" />
<rect x="13" y="424" width="10" height="10" fill="#cc2a00" />
<rect x="14" y="425" width="8" height="8" fill="#bb2200" />
<rect x="296" y="424" width="10" height="10" fill="#cc2a00" />
<rect x="297" y="425" width="8" height="8" fill="#bb2200" />
<rect x="13" y="566" width="10" height="10" fill="#cc2a00" />
<rect x="14" y="567" width="8" height="8" fill="#bb2200" />
<rect x="296" y="566" width="10" height="10" fill="#cc2a00" />
<rect x="297" y="567" width="8" height="8" fill="#bb2200" />
</g>
<g shape-rendering="geometricPrecision" style="will-change:transform">
<text x="203.30" y="106.7" font-size="17.5" fill="#cccccc" font-family='"Liberation Sans", sans-serif' textLength="71.03" lengthAdjust="spacingAndGlyphs" >@name</text>
<text x="62.00" y="156.0" font-size="18" fill="#cccccc" font-family='"Liberation Sans", sans-serif' textLength="42.13" lengthAdjust="spacingAndGlyphs" >GND</text>
<text x="222.19" y="155.5" font-size="18" fill="#cccccc" font-family='"Liberation Sans", sans-serif' textLength="38.96" lengthAdjust="spacingAndGlyphs" >VCC</text>
<text x="110.10" y="186.9" font-size="31" fill="#cccccc" font-family='"Liberation Sans", sans-serif' textLength="165.21" lengthAdjust="spacingAndGlyphs" >@symname</text>
<text x="61.45" y="297.7" font-size="18" fill="#cccccc" font-family='"Liberation Sans", sans-serif' textLength="44.30" lengthAdjust="spacingAndGlyphs" >TRIG</text>
<text x="225.48" y="297.7" font-size="18" fill="#cccccc" font-family='"Liberation Sans", sans-serif' textLength="31.46" lengthAdjust="spacingAndGlyphs" >DIS</text>
<text x="58.87" y="421.8" font-size="18" fill="#cccccc" font-family='"Liberation Sans", sans-serif' textLength="39.64" lengthAdjust="spacingAndGlyphs" >OUT</text>
<text x="203.50" y="422.0" font-size="18" fill="#cccccc" font-family='"Liberation Sans", sans-serif' textLength="62.39" lengthAdjust="spacingAndGlyphs" >THRES</text>
<text x="119.44" y="449.1" font-size="18" fill="#cccccc" font-family='"Liberation Sans", sans-serif' textLength="12.49" lengthAdjust="spacingAndGlyphs" >S</text>
<text x="190.77" y="449.1" font-size="18" fill="#cccccc" font-family='"Liberation Sans", sans-serif' textLength="13.36" lengthAdjust="spacingAndGlyphs" >R</text>
<text x="119.58" y="475.0" font-size="18" fill="#cccccc" font-family='"Liberation Sans", sans-serif' textLength="14.78" lengthAdjust="spacingAndGlyphs" >Q</text>
<text x="61.59" y="564.3" font-size="18" fill="#cccccc" font-family='"Liberation Sans", sans-serif' textLength="73.30" lengthAdjust="spacingAndGlyphs" >RESETB</text>
<text x="201.75" y="564.3" font-size="18" fill="#cccccc" font-family='"Liberation Sans", sans-serif' textLength="48.01" lengthAdjust="spacingAndGlyphs" >CTRL</text>
</g>
<rect x="323" y="277" width="509" height="243" fill="#404040" />
<rect x="323" y="277" width="509" height="1" fill="#5e5e5e" />
<rect x="323" y="277" width="1" height="243" fill="#5e5e5e" />
<rect x="324" y="278" width="507" height="1" fill="#6a6a6a" />
<rect x="324" y="278" width="1" height="241" fill="#6a6a6a" />
<rect x="327" y="281" width="501" height="14" fill="#808080" />
<rect x="327" y="295" width="501" height="221" fill="#d9d9d9" />
<g shape-rendering="geometricPrecision">
<path d="M328,284 L332.5,284 L341,293 L336,293 Z" fill="#ff0000"/>
<path d="M329.5,292.5 L340,284.5" stroke="#ff0000" stroke-width="1" shape-rendering="crispEdges"/>
</g>
<text x="351.34" y="290.5" font-size="10.5" fill="#eef0f4" font-family='"Liberation Sans", sans-serif' textLength="42.45" lengthAdjust="spacingAndGlyphs" >Text input</text>
<rect x="788" y="283" width="12" height="12" fill="#c6c6c6" />
<rect x="788" y="283" width="12" height="1" fill="#e4e4e4" />
<rect x="788" y="283" width="1" height="12" fill="#e4e4e4" />
<rect x="802" y="283" width="12" height="12" fill="#c6c6c6" />
<rect x="802" y="283" width="12" height="1" fill="#e4e4e4" />
<rect x="802" y="283" width="1" height="12" fill="#e4e4e4" />
<rect x="816" y="283" width="12" height="12" fill="#c6c6c6" />
<rect x="816" y="283" width="12" height="1" fill="#e4e4e4" />
<rect x="816" y="283" width="1" height="12" fill="#e4e4e4" />
<rect x="792" y="292" width="7" height="2" fill="#000" />
<rect x="805.5" y="285.5" width="8" height="8" fill="none" stroke="#000" stroke-width="1.1"/>
<rect x="805" y="285" width="9" height="2" fill="#000" />
<path d="M819,286 L826,292.8 M826,286 L819,292.8" stroke="#000" stroke-width="1.8" shape-rendering="geometricPrecision"/>
<rect x="333" y="299" width="11" height="11" fill="#d9d9d9" />
<rect x="333" y="299" width="11" height="1" fill="#7c7c7c" />
<rect x="333" y="299" width="1" height="11" fill="#7c7c7c" />
<rect x="333" y="309" width="11" height="1" fill="#ffffff" />
<rect x="343" y="299" width="1" height="11" fill="#ffffff" />
<path d="M335.5,303.8 L337.8,307 L341.8,301.6" fill="none" stroke="#8e8e8e" stroke-width="2.2" shape-rendering="geometricPrecision"/>
<text x="345.99" y="307.7" font-size="10.5" fill="#adadad" font-family='"Liberation Sans", sans-serif' textLength="129.37" lengthAdjust="spacingAndGlyphs" >preserve unchanged props</text>
<text x="585.73" y="308.0" font-size="10.5" fill="#000000" font-family='"Liberation Sans", sans-serif' textLength="134.15" lengthAdjust="spacingAndGlyphs" stroke="#000000" stroke-width="0.08" >Global schematic property:</text>
<rect x="328" y="315" width="76" height="23" fill="#d9d9d9" />
<rect x="328" y="315" width="76" height="1" fill="#ffffff" />
<rect x="328" y="315" width="1" height="23" fill="#ffffff" />
<rect x="328" y="337" width="76" height="1" fill="#8a8a8a" />
<rect x="403" y="315" width="1" height="23" fill="#8a8a8a" />
<text x="357.85" y="329.8" font-size="10.5" fill="#000000" font-family='"Liberation Sans", sans-serif' textLength="15.33" lengthAdjust="spacingAndGlyphs" stroke="#000000" stroke-width="0.08" >OK</text>
<rect x="406" y="315" width="94" height="23" fill="#d9d9d9" />
<rect x="406" y="315" width="94" height="1" fill="#ffffff" />
<rect x="406" y="315" width="1" height="23" fill="#ffffff" />
<rect x="406" y="337" width="94" height="1" fill="#8a8a8a" />
<rect x="499" y="315" width="1" height="23" fill="#8a8a8a" />
<text x="435.36" y="329.8" font-size="10.5" fill="#000000" font-family='"Liberation Sans", sans-serif' textLength="33.63" lengthAdjust="spacingAndGlyphs" stroke="#000000" stroke-width="0.08" >Cancel</text>
<rect x="502" y="315" width="86" height="23" fill="#d9d9d9" />
<rect x="502" y="315" width="86" height="1" fill="#ffffff" />
<rect x="502" y="315" width="1" height="23" fill="#ffffff" />
<rect x="502" y="337" width="86" height="1" fill="#8a8a8a" />
<rect x="587" y="315" width="1" height="23" fill="#8a8a8a" />
<text x="532.00" y="329.8" font-size="10.5" fill="#000000" font-family='"Liberation Sans", sans-serif' textLength="26.00" lengthAdjust="spacingAndGlyphs" stroke="#000000" stroke-width="0.08" >Load</text>
<rect x="590" y="315" width="79" height="23" fill="#d9d9d9" />
<rect x="590" y="315" width="79" height="1" fill="#ffffff" />
<rect x="590" y="315" width="1" height="23" fill="#ffffff" />
<rect x="590" y="337" width="79" height="1" fill="#8a8a8a" />
<rect x="668" y="315" width="1" height="23" fill="#8a8a8a" />
<text x="620.48" y="329.8" font-size="10.5" fill="#000000" font-family='"Liberation Sans", sans-serif' textLength="17.69" lengthAdjust="spacingAndGlyphs" stroke="#000000" stroke-width="0.08" >Del</text>
<text x="680.35" y="329.8" font-size="10.5" fill="#000000" font-family='"Liberation Sans", sans-serif' textLength="45.58" lengthAdjust="spacingAndGlyphs" stroke="#000000" stroke-width="0.08" >Edit Attr:</text>
<rect x="727" y="318" width="101" height="17" fill="#ffffff" />
<rect x="727" y="318" width="101" height="1" fill="#9a9a9a" />
<rect x="727" y="318" width="1" height="17" fill="#9a9a9a" />
<rect x="727" y="334" width="101" height="1" fill="#ececec" />
<rect x="827" y="318" width="1" height="17" fill="#ececec" />
<text x="729.26" y="330.1" font-size="10.5" fill="#000000" font-family='"Liberation Sans", sans-serif' textLength="34.86" lengthAdjust="spacingAndGlyphs" stroke="#000000" stroke-width="0.08" >&lt;ALL&gt;</text>
<rect x="815" y="320" width="12" height="14" fill="#d9d9d9" />
<rect x="815" y="320" width="12" height="1" fill="#ffffff" />
<rect x="815" y="320" width="1" height="14" fill="#ffffff" />
<rect x="815" y="333" width="12" height="1" fill="#8a8a8a" />
<rect x="826" y="320" width="1" height="14" fill="#8a8a8a" />
<path d="M817,327 L825,327 L821,331 Z" fill="#000" shape-rendering="geometricPrecision"/>
<rect x="327" y="340" width="488" height="163" fill="#ffffff" />
<rect x="327" y="340" width="487" height="2" fill="#8a8a8a" />
<rect x="327" y="340" width="2" height="161" fill="#8a8a8a" />
<rect x="812" y="342" width="3" height="161" fill="#ececec" />
<rect x="329" y="500" width="486" height="3" fill="#ececec" />
<path d="M812,340 L814,340 L812,342 Z M327,501 L329,501 L327,503 Z" fill="#8a8a8a" shape-rendering="geometricPrecision"/>
<rect x="331" y="382" width="270" height="13" fill="#c3c3c3" />
<g shape-rendering="geometricPrecision">
<text x="331.00" y="353.2" font-size="10" fill="#000000" font-family='"Liberation Mono", monospace' textLength="90.00" lengthAdjust="spacingAndGlyphs" stroke="#000" stroke-width="0.3">type=subcircuit</text>
<text x="331.00" y="365.9" font-size="10" fill="#000000" font-family='"Liberation Mono", monospace' textLength="198.00" lengthAdjust="spacingAndGlyphs" stroke="#000" stroke-width="0.3">xformat="@name @pinlist @symname"</text>
<text x="331.00" y="378.7" font-size="10" fill="#000000" font-family='"Liberation Mono", monospace' textLength="468.00" lengthAdjust="spacingAndGlyphs" stroke="#000" stroke-width="0.3">format="@name @@GND @@TRIG @@OUT @@RESETB @@CTRL @@THRES @@DIS @@VCC @symname"</text>
<text x="331.00" y="391.4" font-size="10" fill="#000000" font-family='"Liberation Mono", monospace' textLength="270.00" lengthAdjust="spacingAndGlyphs" stroke="#000" stroke-width="0.3">spice_sym_def=".include model_test_ne555.txt"</text>
<text x="331.00" y="404.2" font-size="10" fill="#000000" font-family='"Liberation Mono", monospace' textLength="108.00" lengthAdjust="spacingAndGlyphs" stroke="#000" stroke-width="0.3">template="name=x1"</text>
</g>
<rect x="815" y="339" width="13" height="177" fill="#c3c3c3" />
<rect x="815" y="339" width="13" height="1" fill="#8a8a8a" />
<rect x="815" y="339" width="1" height="177" fill="#8a8a8a" />
<rect x="827" y="340" width="1" height="176" fill="#ffffff" />
<rect x="816" y="515" width="12" height="1" fill="#ffffff" />
<rect x="816" y="352" width="11" height="151" fill="#d9d9d9" />
<rect x="816" y="352" width="11" height="1" fill="#ffffff" />
<rect x="816" y="352" width="1" height="151" fill="#ffffff" />
<rect x="816" y="502" width="11" height="1" fill="#8a8a8a" />
<rect x="826" y="352" width="1" height="151" fill="#8a8a8a" />
<g shape-rendering="geometricPrecision">
<path d="M816.5,350.5 L821,340.5 L826,350.5 Z" fill="#d9d9d9"/>
<path d="M816.5,350.5 L821,340.5" fill="none" stroke="#ffffff" stroke-width="1.2"/>
<path d="M821,340.5 L826,350.5 L816.5,350.5" fill="none" stroke="#8a8a8a" stroke-width="1.2"/>
<path d="M816.5,504.5 L826,504.5 L821,514.5 Z" fill="#d9d9d9"/>
<path d="M826,504.5 L821,514.5" fill="none" stroke="#8a8a8a" stroke-width="1.2"/>
<path d="M816.5,504.5 L826,504.5 M816.5,504.5 L821,514.5" fill="none" stroke="#ffffff" stroke-width="1.2"/>
</g>
<rect x="327" y="503" width="488" height="13" fill="#c3c3c3" />
<rect x="327" y="503" width="488" height="1" fill="#8a8a8a" />
<rect x="327" y="503" width="1" height="13" fill="#8a8a8a" />
<rect x="328" y="515" width="487" height="1" fill="#ffffff" />
<rect x="814" y="504" width="1" height="12" fill="#ffffff" />
<rect x="340" y="504" width="463" height="11" fill="#d9d9d9" />
<rect x="340" y="504" width="463" height="1" fill="#ffffff" />
<rect x="340" y="504" width="1" height="11" fill="#ffffff" />
<rect x="340" y="514" width="463" height="1" fill="#8a8a8a" />
<rect x="802" y="504" width="1" height="11" fill="#8a8a8a" />
<g shape-rendering="geometricPrecision">
<path d="M339.5,504.5 L328.5,509.5 L339.5,514.5 Z" fill="#d9d9d9"/>
<path d="M339.5,504.5 L328.5,509.5" fill="none" stroke="#ffffff" stroke-width="1.2"/>
<path d="M328.5,509.5 L339.5,514.5 L339.5,504.5" fill="none" stroke="#8a8a8a" stroke-width="1.2"/>
<path d="M803.5,504.5 L813.5,509.5 L803.5,514.5 Z" fill="#d9d9d9"/>
<path d="M813.5,509.5 L803.5,514.5" fill="none" stroke="#8a8a8a" stroke-width="1.2"/>
<path d="M803.5,514.5 L803.5,504.5 L813.5,509.5" fill="none" stroke="#ffffff" stroke-width="1.2"/>
</g>
<rect x="0" y="596" width="900" height="19" fill="#d9d9d9" />
<text x="1.58" y="608.8" font-size="10.5" fill="#000000" font-family='"Liberation Sans", sans-serif' textLength="30.33" lengthAdjust="spacingAndGlyphs" stroke="#000000" stroke-width="0.08" >SNAP:</text>
<rect x="34" y="597" width="64" height="17" fill="#98f898" />
<rect x="34" y="597" width="64" height="1" fill="#5a9a5a" />
<rect x="34" y="597" width="1" height="17" fill="#5a9a5a" />
<text x="35.56" y="608.8" font-size="10.5" fill="#000000" font-family='"Liberation Sans", sans-serif' textLength="13.37" lengthAdjust="spacingAndGlyphs" stroke="#000000" stroke-width="0.08" >10</text>
<text x="100.28" y="608.8" font-size="10.5" fill="#000000" font-family='"Liberation Sans", sans-serif' textLength="30.94" lengthAdjust="spacingAndGlyphs" stroke="#000000" stroke-width="0.08" >GRID:</text>
<rect x="133" y="597" width="64" height="17" fill="#98f898" />
<rect x="133" y="597" width="64" height="1" fill="#5a9a5a" />
<rect x="133" y="597" width="1" height="17" fill="#5a9a5a" />
<text x="135.13" y="608.8" font-size="10.5" fill="#000000" font-family='"Liberation Sans", sans-serif' textLength="13.04" lengthAdjust="spacingAndGlyphs" stroke="#000000" stroke-width="0.08" >20</text>
<text x="199.31" y="608.8" font-size="10.5" fill="#000000" font-family='"Liberation Sans", sans-serif' textLength="78.50" lengthAdjust="spacingAndGlyphs" stroke="#000000" stroke-width="0.08" >NETLIST MODE:</text>
<rect x="279" y="597" width="52" height="17" fill="#ffffff" />
<rect x="279" y="597" width="52" height="1" fill="#a0a0a0" />
<rect x="279" y="597" width="1" height="17" fill="#a0a0a0" />
<text x="286.19" y="608.8" font-size="10.5" fill="#000000" font-family='"Liberation Sans", sans-serif' textLength="37.30" lengthAdjust="spacingAndGlyphs" stroke="#000000" stroke-width="0.08" >symbol</text>
<text x="336.59" y="608.8" font-size="10.5" fill="#000000" font-family='"Liberation Sans", sans-serif' textLength="215.98" lengthAdjust="spacingAndGlyphs" stroke="#000000" stroke-width="0.08" >mouse = -90 -160 - selected: 0 path: .x3.x1.</text>
<rect x="900" y="0" width="3" height="617" fill="#3c3c3c" />
<rect x="0" y="615" width="903" height="2" fill="#3c3c3c" />
<g shape-rendering="geometricPrecision" fill="#000" stroke="none">
<path d="M3.7,39.3 L10.2,39.3 L12.6,41.6 L21.8,41.6 Q23.4,41.8 23.4,43.8 L3.4,43.8 Z"/>
<path d="M1.2,45.2 L25,45.2 L23.6,58.3 L2.4,58.3 Z"/>
<path fill-rule="evenodd" d="M31,39.2 L45.6,39.2 L48.6,42.2 L48.6,56.4 Q48.6,58.3 46.8,58.3 L31.2,58.3 Q29.4,58.3 29.4,56.4 L29.4,41 Q29.4,39.2 31,39.2 Z M34,40.9 L44,40.9 L44,47.8 L34,47.8 Z"/>
<rect x="40.3" y="41.8" width="2.3" height="4.6"/>
<path d="M64.5,44.8 L56.5,44.8 Q54.8,44.8 54.8,46.5 L54.8,52.5 Q54.8,54.2 56.5,54.2 L73.5,54.2 Q75.2,54.2 75.2,52.5 L75.2,46.5 Q75.2,44.8 73.5,44.8 L70.3,44.8" fill="none" stroke="#000" stroke-width="3.4"/>
<path d="M63.6,40.6 L68.2,44.7 L63.6,48.6 Z"/>
<g transform="translate(80.6,35.2) scale(1.183,1.02)"><path d="M10 9V5l-7 7 7 7v-4.1c5 0 8.5 1.6 11 5.1-1-5-4-10-11-11z"/></g>
<g transform="translate(106.8,35.0) scale(1.183,1.02)"><path d="M14 9V5l7 7-7 7v-4.1c-5 0-8.5 1.6-11 5.1 1-5 4-10 11-11z"/></g>
<g fill="none" stroke="#000" stroke-width="1.9">
<ellipse cx="140.5" cy="43.6" rx="3.4" ry="3.3"/>
<ellipse cx="140.5" cy="54.3" rx="3.4" ry="3.3"/>
</g>
<path d="M143.2,45.8 L156.5,54.2" stroke="#000" stroke-width="2.4" stroke-linecap="round"/>
<path d="M143.2,52.2 L147,49.8" stroke="#000" stroke-width="2.2"/>
<path d="M150.6,46.8 L156.2,43.8" stroke="#000" stroke-width="2.4" stroke-linecap="round"/>
<rect x="163.1" y="38.4" width="12.6" height="15.2" fill="none" stroke="#000" stroke-width="2.2"/>
<rect x="180.4" y="41.5" width="2.2" height="2.2" rx="0.6"/>
<rect x="180.4" y="46.4" width="2.2" height="2.2" rx="0.6"/>
<rect x="180.4" y="51.3" width="2.2" height="2.2" rx="0.6"/>
<rect x="169.3" y="56.2" width="2.2" height="2.2" rx="0.6"/>
<rect x="175.1" y="56.2" width="2.2" height="2.2" rx="0.6"/>
<rect x="180.4" y="56.2" width="2.2" height="2.2" rx="0.6"/>
<rect x="175.5" y="41.5" width="2.2" height="2.2" rx="0.6"/>
<rect x="196.3" y="42.4" width="12.2" height="14.2" fill="none" stroke="#000" stroke-width="2.2"/>
<rect x="188.3" y="36.7" width="2.2" height="2.2" rx="0.6"/>
<rect x="193.9" y="36.7" width="2.2" height="2.2" rx="0.6"/>
<rect x="199.4" y="36.7" width="2.2" height="2.2" rx="0.6"/>
<rect x="188.3" y="41.5" width="2.2" height="2.2" rx="0.6"/>
<rect x="188.3" y="46.4" width="2.2" height="2.2" rx="0.6"/>
<rect x="188.3" y="51.3" width="2.2" height="2.2" rx="0.6"/>
<rect x="194.1" y="51.3" width="2.2" height="2.2" rx="0.6"/>
<path d="M220.3,44.3 L229.4,53.4 M229.4,44.3 L220.3,53.4" stroke="#000" stroke-width="2.6" stroke-linecap="round"/>
<path d="M243.2,43.2 L260.6,37.3 L262.8,43.4 L261.5,43.9 L257.7,40.6 L252.6,43.6 L246.3,44.6 L245,50 Z"/>
<rect x="247.8" y="46.3" width="19.2" height="13.3" rx="0.6"/>
<path d="M249.9,57.3 L249.9,53 L252.2,50.1 L255.6,53.7 L259,50.7 L263,49.5 L264.9,51 L264.9,57.3 Z" fill="#fff"/>
<path d="M269.2,44.7 L274.2,40.7 L274.2,43 L285.8,43 L285.8,46.6 L274.2,46.6 L274.2,48.7 Z"/>
<path d="M293.2,53 L288.2,49 L288.2,51 L276.2,51 L276.2,55 L288.2,55 L288.2,57.3 Z"/>
<path d="M306.4,40.9 L315.7,40.9 L315.7,49.3 L319.7,49.3 L310.9,57.6 L302,49.3 L306.4,49.3 Z"/>
<path d="M333,37.3 L339.3,37.3 L339.3,41.3 L343.2,41.3 L336.2,46.8 L329,41.3 L333,41.3 Z"/>
<path d="M329.8,49.6 L338.5,49.6 Q344.5,49.6 344.5,54.4 Q344.5,59.2 338.5,59.2 L329.8,59.2 Z" fill="none" stroke="#000" stroke-width="2.5"/>
<path d="M325,52 L329.5,52 M325,56.8 L329.5,56.8 M344.5,54.3 L349,54.3" stroke="#000" stroke-width="2"/>
<path d="M363.1,40 L371.6,48.8 L367.5,48.8 L367.5,57.3 L358.2,57.3 L358.2,48.8 L354.2,48.8 Z"/>
<path d="M404.8,37.4 Q400,43.5 391.2,53.4 L387.4,50 Q396,42 404.8,37.4 Z"/>
<path d="M386.3,51.2 L389.6,54.2 Q389.5,57.4 385.8,58.9 Q383.5,59.8 381.2,59.9 Q382.3,58.5 382.7,56.4 Q383.2,52.6 386.3,51.2 Z"/>
<circle cx="419.2" cy="49" r="5.6" fill="none" stroke="#000" stroke-width="1.9"/>
<path d="M419.2,43.4 A5.6,5.6 0 0 1 419.2,54.6 Z"/>
<path d="M428.40,49.00 L430.00,49.00 M425.71,55.51 L426.84,56.64 M419.20,58.20 L419.20,59.80 M412.69,55.51 L411.56,56.64 M410.00,49.00 L408.40,49.00 M412.69,42.49 L411.56,41.36 M419.20,39.80 L419.20,38.20 M425.71,42.49 L426.84,41.36" stroke="#000" stroke-width="1.9" stroke-linecap="round"/>
<path d="M442.2,43.2 L451,43.2 Q456.9,43.2 456.9,48.6 Q456.9,54 451,54 L442.2,54 Z" fill="none" stroke="#000" stroke-width="2.8"/>
<path d="M437,44.9 L442,44.9 M437,51.8 L442,51.8 M457,48.8 L460.8,48.8" stroke="#000" stroke-width="2.2"/>
<path d="M468.8,39.1 L474.5,39.1 M468.8,44.9 L482,44.9 M468.8,50.3 L477,50.3 M468.8,56.5 L483,56.5" stroke="#000" stroke-width="2.5" stroke-linecap="round"/>
<path d="M500.9,44 L500.9,54" stroke="#000" stroke-width="2.3"/>
<circle cx="500.9" cy="41.8" r="2.3" fill="none" stroke="#000" stroke-width="1.8"/>
<circle cx="500.9" cy="56.2" r="2.3" fill="none" stroke="#000" stroke-width="1.8"/>
<path d="M520.9,48.8 L532.8,48.8" stroke="#000" stroke-width="2.3" stroke-linecap="round"/>
<rect x="545.8" y="39.2" width="14.4" height="19.3" fill="none" stroke="#000" stroke-width="2.2"/>
<path d="M571.2,46.8 L580.6,39 L580.4,47 L587.6,50.9 L577.6,50.4 L574.2,58.6 Z" fill="none" stroke="#000" stroke-width="2.2" stroke-linejoin="round"/>
<path d="M597,40 A18,18.8 0 0 1 614.6,58.8" fill="none" stroke="#000" stroke-width="2.5" stroke-linecap="round"/>
<ellipse cx="631" cy="48.7" rx="10.2" ry="10.1" fill="none" stroke="#000" stroke-width="2.3"/>
<circle cx="657.5" cy="45.3" r="6.2" fill="none" stroke="#000" stroke-width="2.3"/>
<path d="M662.2,50.2 L669.6,57.6" stroke="#000" stroke-width="2.8" stroke-linecap="round"/>
<path d="M693.6,46.4 L700.4,46.4 L693.6,39.6 Z"/>
<path d="M696.6,43.4 L700.1,39.9" stroke="#000" stroke-width="2.6" stroke-linecap="round"/>
<path d="M688.6,51.4 L681.8000000000001,51.4 L688.6,58.199999999999996 Z"/>
<path d="M685.6,54.4 L682.1,57.9" stroke="#000" stroke-width="2.6" stroke-linecap="round"/>
<path d="M726.6,39.4 L719.8000000000001,39.4 L726.6,46.199999999999996 Z"/>
<path d="M723.6,42.4 L720.1,45.9" stroke="#000" stroke-width="2.6" stroke-linecap="round"/>
<path d="M707.6,58.6 L714.4,58.6 L707.6,51.800000000000004 Z"/>
<path d="M710.6,55.6 L714.1,52.1" stroke="#000" stroke-width="2.6" stroke-linecap="round"/>
<path d="M823.2,46.8 L828.4,46.8 L828.4,43.5 L835,49 L828.4,54.8 L828.4,51.1 L823.2,51.1 Z"/>
<rect x="836.8" y="42.1" width="9" height="15.2" fill="none" stroke="#000" stroke-width="1.8"/>
<path d="M838.3,44.8 L844.3,44.8 M838.3,48.1 L844.3,48.1 M838.3,51.5 L844.3,51.5 M838.3,54.8 L844.3,54.8" stroke="#000" stroke-width="1.1"/>
<path d="M855.2,42.1 L867,49 L855.2,55.8 Z"/>
<path d="M876.6,39 L876.6,59.6" stroke="#000" stroke-width="1.6"/>
<path d="M875,57.5 L898.8,57.5" stroke="#000" stroke-width="1.8"/>
<path d="M877,44.9 L883.6,44.9 L883.6,40.9 L885,40.9 L885,44.9 L889,44.9 L889,40.9 L891.3,40.9 L891.3,44.9 L895.2,44.9 L895.2,40.9 L898.8,40.9" fill="none" stroke="#000" stroke-width="2"/>
<path d="M877,51.8 L884.8,51.8 L884.8,48.2 L898.8,48.2" fill="none" stroke="#000" stroke-width="2"/>
</g>
</svg>
</body></html>
